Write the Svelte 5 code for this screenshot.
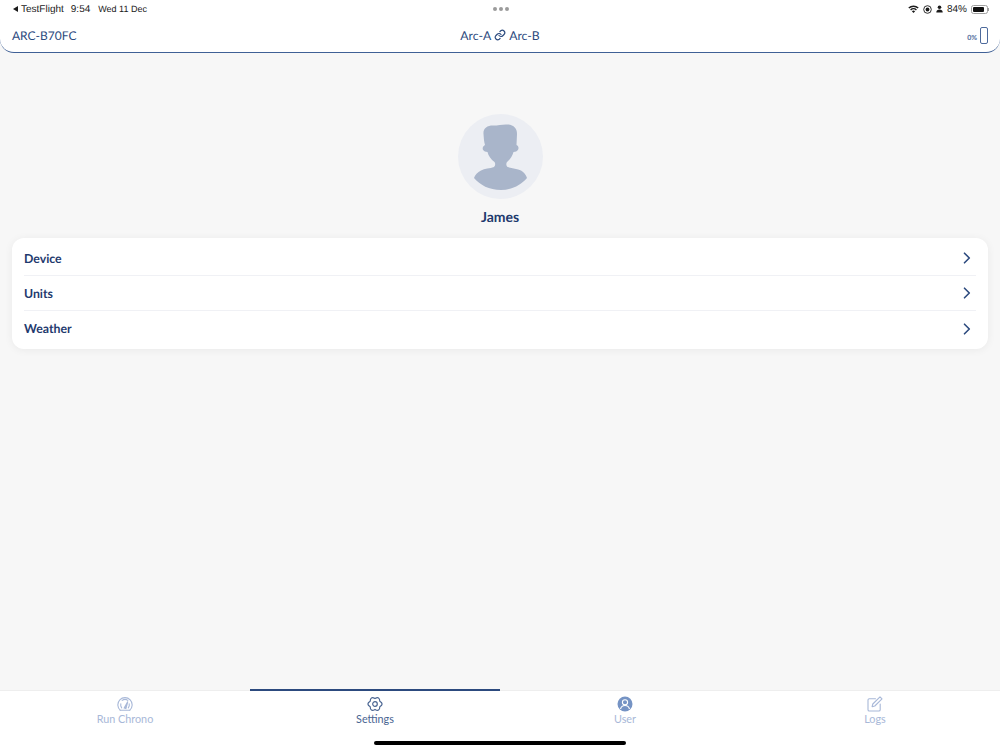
<script lang="ts">
    const rows = ["Device", "Units", "Weather"];
    const tabs = [
        { id: "run", label: "Run Chrono" },
        { id: "settings", label: "Settings" },
        { id: "user", label: "User" },
        { id: "logs", label: "Logs" }
    ];
    let active = $state("settings");
</script>

<div class="app">
    <header class="top">
        <div class="status">
            <div class="status-left">
                <span class="back"></span>
                <span>TestFlight</span>
                <span class="time">9:54</span>
                <span class="date">Wed 11 Dec</span>
            </div>
            <div class="dots"><i></i><i></i><i></i></div>
            <div class="status-right">
                <svg width="11" height="8" viewBox="0 0 11 8">
                    <path d="M0.3 2.6a7.4 7.4 0 0 1 10.4 0l-1 1a6 6 0 0 0-8.4 0z" fill="#1a1a1a"/>
                    <path d="M2.1 4.4a4.9 4.9 0 0 1 6.8 0l-1 1a3.5 3.5 0 0 0-4.8 0z" fill="#1a1a1a"/>
                    <path d="M3.9 6.2a2.4 2.4 0 0 1 3.2 0L5.5 7.9z" fill="#1a1a1a"/>
                </svg>
                <svg width="9" height="9" viewBox="0 0 9 9">
                    <circle cx="4.5" cy="4.5" r="3.8" fill="none" stroke="#1a1a1a" stroke-width="0.9"/>
                    <circle cx="4.5" cy="4.5" r="1.9" fill="#1a1a1a"/>
                </svg>
                <svg width="7" height="8" viewBox="0 0 7 8">
                    <circle cx="3.5" cy="2.2" r="1.8" fill="#1a1a1a"/>
                    <path d="M0.3 7.5c0-2.2 1.4-3 3.2-3s3.2.8 3.2 3z" fill="#1a1a1a"/>
                </svg>
                <span class="pct">84%</span>
                <span class="batt"><span class="batt-fill"></span></span>
                <span class="batt-tip"></span>
            </div>
        </div>
        <div class="nav">
            <div class="device-id">ARC-B70FC</div>
            <div class="link">
                <span>Arc-A</span>
                <svg width="12" height="12" viewBox="0 0 24 24" fill="none" stroke="#2c4a7e" stroke-width="2.4" stroke-linecap="round" stroke-linejoin="round">
                    <path d="M10 13a5 5 0 0 0 7.5.5l3-3a5 5 0 0 0-7-7l-1.7 1.7"/>
                    <path d="M14 11a5 5 0 0 0-7.5-.5l-3 3a5 5 0 0 0 7 7l1.7-1.7"/>
                </svg>
                <span>Arc-B</span>
            </div>
            <div class="charge">
                <span class="charge-pct">0%</span>
                <span class="charge-cell"></span>
            </div>
        </div>
    </header>

    <main class="content">
        <div class="avatar">
            <svg width="53" height="66" viewBox="0 0 53 66">
                <path fill="#a9b5ca" d="M9.500 10C9 4.500 13 1.500 19 1.500 25 1.500 29 0 34 .5 40 1 43 4.500 43 10L42.500 21C44.500 22 45 24 44 25.800 43 27.300 41.500 28 39.500 28 38.500 32 36 35.500 33 38 32 39.500 32 41.500 33.500 43 38 44.500 43.500 44.500 47 46.500 50 48.200 52 51 53 54 47 61 38 66 27 66 15 66 6 61 0 54 1 51 3.500 48.200 7 46.500 10.500 44.500 16 44.500 20 43 21.500 41.500 21.500 39.500 20.500 38 17 35.500 14.500 32 13.500 28 11.500 28 10 27.300 9 25.800 8.200 24 9 22 11 21 10 18 9.800 14 9.500 10Z"/>
            </svg>
        </div>
        <div class="name">James</div>

        <section class="card">
            {#each rows as row}
                <div class="row">
                    <span>{row}</span>
                    <svg width="8" height="12" viewBox="0 0 8 12" fill="none" stroke="#2c4a7e" stroke-width="1.600" stroke-linecap="round" stroke-linejoin="round">
                        <path d="M1.500 1.200 6.300 6l-4.800 4.800"/>
                    </svg>
                </div>
            {/each}
        </section>
    </main>

    <nav class="tabs">
        {#each tabs as tab}
            <button class="tab" class:active={active === tab.id} onclick={() => (active = tab.id)}>
                {#if tab.id === "run"}
                    <svg width="16" height="16" viewBox="0 0 16 16" fill="none" stroke="currentColor" stroke-width="1.100" stroke-linecap="round">
                        <path d="M3.200 14.200A7.200 7.200 0 1 1 12.800 14.200"/>
                        <path d="M3.200 14.200h9.600"/>
                        <path d="M4.700 11.800a4.600 4.600 0 0 1-.9-4M5.200 4.400a4.600 4.600 0 0 1 5.600 0M12.200 7.800a4.600 4.600 0 0 1-.9 4"/>
                        <path d="M7.200 12 10.800 5.500 8.900 12.500z" fill="currentColor"/>
                    </svg>
                {:else if tab.id === "settings"}
                    <svg width="16" height="16" viewBox="0 0 16 16" fill="none" stroke="currentColor" stroke-width="1.200" stroke-linejoin="round">
                        <path d="M8 2.600Q3.300 -.14 3.200 5.300-1.400 8 3.200 10.700 3.300 16.140 8 13.400 12.700 16.140 12.800 10.700 17.400 8 12.800 5.300 12.700 -.14 8 2.600Z"/>
                        <circle cx="8" cy="8" r="2.300"/>
                    </svg>
                {:else if tab.id === "user"}
                    <svg width="16" height="16" viewBox="0 0 16 16">
                        <circle cx="8" cy="8" r="7.500" fill="currentColor"/>
                        <circle cx="8" cy="6.300" r="2.600" fill="none" stroke="#fff" stroke-width="1.100"/>
                        <path d="M3.500 13c.6-2.400 2.400-3.500 4.500-3.500s3.900 1.100 4.500 3.500" fill="none" stroke="#fff" stroke-width="1.100"/>
                    </svg>
                {:else}
                    <svg width="16" height="16" viewBox="0 0 16 16" fill="none" stroke="currentColor" stroke-width="1.100" stroke-linecap="round" stroke-linejoin="round">
                        <path d="M8.500 2.800H2.300a1.300 1.300 0 0 0-1.300 1.300v9.600A1.300 1.300 0 0 0 2.300 15h9.600a1.300 1.300 0 0 0 1.300-1.300V8"/>
                        <path d="M13 .8l2 2-7.200 7.200-2.700.7.700-2.700z"/>
                    </svg>
                {/if}
                <span>{tab.label}</span>
            </button>
        {/each}
        <div class="home-bar"></div>
    </nav>
</div>

<style>
    :global(body) {
        margin: 0;
        background: #f7f7f7;
    }

    .app {
        display: flex;
        flex-direction: column;
        height: 750px;
        width: 1000px;
        overflow: hidden;
        font-family: Lato, "Open Sans", sans-serif;
        color: #1f3a6e;
        text-rendering: geometricPrecision;
    }

    .top {
        flex: none;
        height: 53px;
        box-sizing: border-box;
        background: #fff;
        border-bottom: 1px solid #3f6096;
        border-radius: 0 0 14px 14px;
    }

    .status {
        display: grid;
        grid-template-columns: 1fr auto 1fr;
        align-items: center;
        height: 18px;
        padding: 0 11px 0 13px;
        font-family: "Liberation Sans", Arial, sans-serif;
        font-size: 10px;
        color: #1a1a1a;
    }

    .status-left {
        display: flex;
        align-items: center;
        gap: 3px;
    }

    .back {
        width: 0;
        height: 0;
        border-top: 3px solid transparent;
        border-bottom: 3px solid transparent;
        border-right: 5px solid #1a1a1a;
    }

    .time {
        margin-left: 4px;
    }

    .date {
        margin-left: 5px;
        font-size: 9px;
    }

    .dots {
        display: flex;
        gap: 2px;
    }

    .dots i {
        width: 4px;
        height: 4px;
        border-radius: 50%;
        background: #9b9b9b;
    }

    .status-right {
        display: flex;
        align-items: center;
        justify-content: flex-end;
        gap: 4px;
    }

    .batt {
        display: block;
        width: 17px;
        height: 9px;
        padding: 1px;
        box-sizing: border-box;
        border: 1px solid #a0a0a0;
        border-radius: 2.500px;
    }

    .batt-fill {
        display: block;
        width: 84%;
        height: 100%;
        background: #111;
        border-radius: 1px;
    }

    .batt-tip {
        width: 1px;
        height: 3px;
        margin-left: -4px;
        background: #a0a0a0;
    }

    .nav {
        display: grid;
        grid-template-columns: 1fr auto 1fr;
        align-items: center;
        height: 34px;
        padding: 0 12px;
        font-size: 12.200px;
        color: #2c4a7e;
    }

    .device-id {
        font-size: 12px;
    }

    .link {
        display: flex;
        align-items: center;
        gap: 3px;
    }

    .charge {
        display: flex;
        align-items: center;
        justify-content: flex-end;
        gap: 3px;
    }

    .charge-pct {
        font-size: 7px;
        font-weight: 900;
        color: #5f7aa6;
        margin-top: 6px;
    }

    .charge-cell {
        width: 6px;
        height: 15px;
        border: 1px solid #4d6a9c;
        border-radius: 2px;
    }

    .content {
        flex: 1;
        display: flex;
        flex-direction: column;
        align-items: center;
        padding: 61px 12px 0;
    }

    .avatar {
        display: flex;
        align-items: center;
        justify-content: center;
        width: 85px;
        height: 85px;
        border-radius: 50%;
        background: #eceef3;
    }

    .name {
        margin-top: 9px;
        font-size: 14px;
        font-weight: 700;
        line-height: 17px;
        color: #1f3a6e;
    }

    .card {
        align-self: stretch;
        margin-top: 13px;
        padding: 3px 12px;
        background: #fff;
        border-radius: 12px;
        box-shadow: 0 1px 8px rgba(0, 0, 0, 0.06);
    }

    .row {
        display: flex;
        align-items: center;
        justify-content: space-between;
        height: 35px;
        box-sizing: border-box;
        font-size: 12.300px;
        font-weight: 700;
        color: #1f3a6e;
        padding-right: 5px;
        border-bottom: 1px solid #f0f1f5;
    }

    .row:last-child {
        border-bottom: none;
    }

    .tabs {
        position: relative;
        flex: none;
        display: grid;
        grid-template-columns: repeat(4, 1fr);
        height: 60px;
        background: #fff;
        border-top: 1px solid #eeeeee;
        box-sizing: border-box;
    }

    .tab {
        display: flex;
        flex-direction: column;
        align-items: center;
        gap: 0;
        margin-top: -2px;
        padding: 5px 0 0;
        background: none;
        border: none;
        border-top: 2px solid transparent;
        font-family: inherit;
        font-size: 10.800px;
        line-height: 13px;
        color: #a8b8d8;
        cursor: pointer;
    }

    .tab.active {
        border-top-color: #2c4a7e;
        color: #4a6592;
    }

    .tab:nth-child(3) svg {
        color: #7593c4;
    }

    .home-bar {
        position: absolute;
        left: 374px;
        bottom: 5px;
        width: 252px;
        height: 4px;
        border-radius: 2px;
        background: #000;
    }
</style>
